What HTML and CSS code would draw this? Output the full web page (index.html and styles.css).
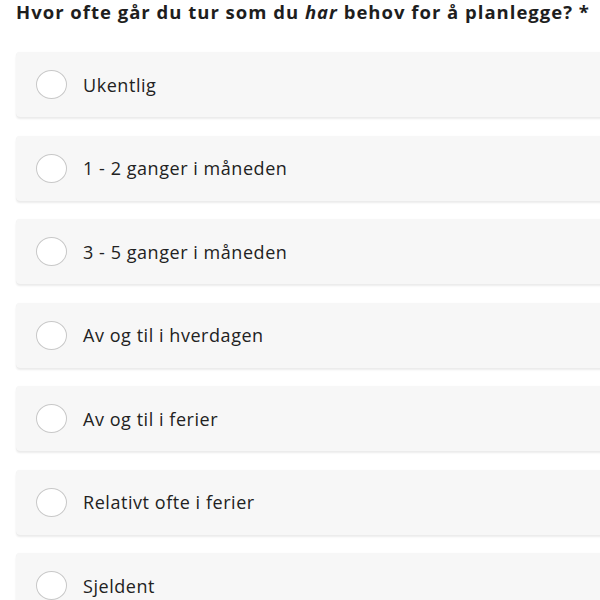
FILE: index.html
```html
<!DOCTYPE html>
<html lang="no">
<head>
<meta charset="utf-8">
<link rel="stylesheet" href="styles.css">
</head>
<body>
<div class="question">
  <h1 class="title">Hvor ofte går du tur som du <em>har</em> behov for å planlegge? *</h1>
  <div class="options">
    <label class="option"><span class="radio"></span><span class="label">Ukentlig</span></label>
    <label class="option"><span class="radio"></span><span class="label">1 - 2 ganger i måneden</span></label>
    <label class="option"><span class="radio"></span><span class="label">3 - 5 ganger i måneden</span></label>
    <label class="option"><span class="radio"></span><span class="label">Av og til i hverdagen</span></label>
    <label class="option"><span class="radio"></span><span class="label">Av og til i ferier</span></label>
    <label class="option"><span class="radio"></span><span class="label">Relativt ofte i ferier</span></label>
    <label class="option"><span class="radio"></span><span class="label">Sjeldent</span></label>
  </div>
</div>
</body>
</html>
```
FILE: styles.css
```css
html, body {
  margin: 0;
  padding: 0;
  background: #fff;
  overflow: hidden;
}
body {
  font-family: "Open Sans", "Liberation Sans", sans-serif;
  color: #222;
}
.question {
  padding: 1px 0 0 16px;
  width: 620px;
}
.title {
  margin: 0;
  font-size: 18.5px;
  font-weight: 700;
  letter-spacing: 1px;
  line-height: 22px;
  white-space: nowrap;
  color: #1e1e1e;
}
.title em {
  font-style: italic;
}
.options {
  display: flex;
  flex-direction: column;
  gap: 18.5px;
  margin-top: 29px;
}
.option {
  display: flex;
  align-items: center;
  height: 65px;
  box-sizing: border-box;
  padding-left: 20px;
  background: #f7f7f7;
  border-radius: 4px;
  box-shadow: 0 2px 2px rgba(0,0,0,0.08), 0 0 1px rgba(0,0,0,0.06);
}
.radio {
  width: 29px;
  height: 27px;
  border: 1.5px solid #c8c8c8;
  border-radius: 50%;
  background: #fff;
  flex: none;
}
.label {
  margin-left: 16px;
  font-size: 18px;
  letter-spacing: 0.55px;
  color: #222;
}
```
